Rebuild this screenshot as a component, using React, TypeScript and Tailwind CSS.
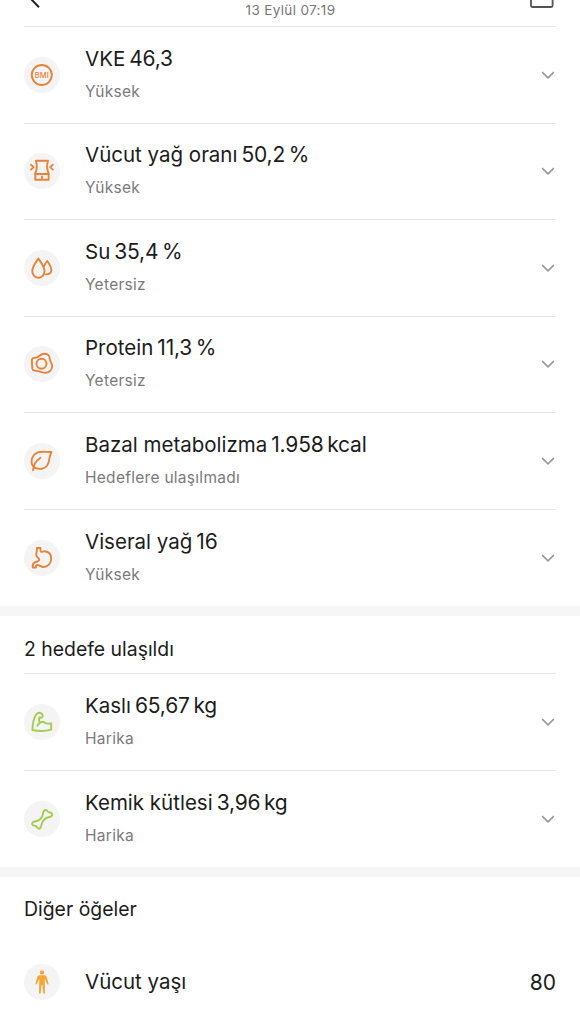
import type { ReactNode } from 'react';

type Item = {
  name: string;
  value: string;
  status: string;
  icon: ReactNode;
};

const bmiIcon = (
  <>
    <circle cx="17.8" cy="18" r="10" />
    <text x="17.8" y="20.7" textAnchor="middle" fontSize="7.6" fontWeight="500" fill="currentColor" stroke="none">BMI</text>
  </>
);

const waistIcon = (
  <>
    <path d="M11.9 7.8H24c-1.4 4.6-1.3 8.6.6 12.4v6.6H11.3v-6.6c1.9-3.8 2-7.8.6-12.4Z" />
    <path d="M11.3 21h13.3M18 23.4v1.8M7 11.8l2.6 2.3L7 16.6M28.8 11.8l-2.6 2.3 2.6 2.5" />
  </>
);

const waterIcon = (
  <>
    <path d="M14.4 8.4c2.4 3.7 6.1 8.2 6.1 12.7 0 3.9-2.7 6.7-6.1 6.7s-6.1-2.8-6.1-6.7c0-4.5 3.7-9 6.1-12.7Z" />
    <path d="M20 16.2c.9-2 2.1-3.8 3.2-5.2 2.1 3.1 4.2 6 4.2 8.9 0 2.8-2.3 4.5-5.8 4.5" />
  </>
);

const proteinIcon = (
  <>
    <path d="M8 13.5c.4-2.4 2.7-1.2 4.8-2.1 2.6-1 4.1-3.5 7.2-3.7 3.4-.2 5.6 1.7 5.7 4.8.1 3.2 2.7 4.9 2.5 8-.2 3.6-3.3 6.4-6.9 6.3-3.5-.1-5.6-1.9-9-1.9-2.8 0-4.3-1-4.1-3.5.2-2.8-.7-5.1-.2-7.9Z" />
    <circle cx="17.5" cy="17.7" r="5" />
  </>
);

const leafIcon = (
  <path d="M9 27.2c.5-5.1 3-9.4 7.5-12.4M9.6 23.8C5.8 19.6 7.5 11.8 14 9.4c4.4-1.7 9.5.1 13.4-.5-.5 2.5-1.7 3.7-2 6.6-.5 5.2-2.9 9.5-7.5 10.2-3.1.5-5.9-.1-8.3-1.9Z" />
);

const stomachIcon = (
  <path d="M12.9 8h3.6c0 1.5-.3 3.7.8 3.9 1.1.2 1.8-.9 3.4-.7 4 .5 6.5 3.3 6.5 7.3 0 5.1-3.4 8.5-7.6 8.5-2.8 0-4.1-2-6.2-2-1.2 0-1.6.9-1.5 2.5H8.7c-.4-3.7.8-5.3 3.8-5.8 1.8-.3 2.9-1.4 2.5-2.7-.4-1.2-2.4-1.6-2.7-4-.3-2.2.9-4.2.6-7Z" />
);

const muscleIcon = (
  <path d="M8.4 26c.2-5.8.9-10.9 3.4-15 1.3-2.2 3.8-2.9 5.6-1.4 1.4 1.1 1.7 2.5.8 3.5-.8.9-1.9.8-2.9.3-.6 2.1-.5 3.7.4 5.7 2.3-1.7 4.3-1.5 5.6.1 1.7.7 3.7.4 5.9.2v6.3c-6.2 1.7-12.6 1.7-18.8.3ZM15.7 19.1c-1.3.7-2 1.5-2.3 2.7" />
);

const boneIcon = (
  <path d="M19 13c0-3 1.5-4.3 3-4 1.3.3 1.3 2 3 2.3 2.5.2 3.7 1.7 3 3.2-.7 1.5-2.5 1.5-4.5 2-3 1-4.5 3-5.5 5.5-.8 2-.5 4.5-2.5 5.6-1.7.7-2.3-1.4-3.2-2.2-1-.7-3.3-.4-4.1-2.1-.7-1.9 1.3-2.7 3.3-3C15 19.8 18.5 17 19 13Z" />
);

const attention: Item[] = [
  { name: 'VKE', value: '46,3', status: 'Yüksek', icon: bmiIcon },
  { name: 'Vücut yağ oranı', value: '50,2 %', status: 'Yüksek', icon: waistIcon },
  { name: 'Su', value: '35,4 %', status: 'Yetersiz', icon: waterIcon },
  { name: 'Protein', value: '11,3 %', status: 'Yetersiz', icon: proteinIcon },
  { name: 'Bazal metabolizma', value: '1.958 kcal', status: 'Hedeflere ulaşılmadı', icon: leafIcon },
  { name: 'Viseral yağ', value: '16', status: 'Yüksek', icon: stomachIcon },
];

const reached: Item[] = [
  { name: 'Kaslı', value: '65,67 kg', status: 'Harika', icon: muscleIcon },
  { name: 'Kemik kütlesi', value: '3,96 kg', status: 'Harika', icon: boneIcon },
];

function IconBadge({ color, children }: { color: string; children: ReactNode }) {
  return (
    <div className={`size-9 shrink-0 rounded-full bg-[#f4f4f4] ${color}`}>
      <svg viewBox="0 0 36 36" className="size-9" fill="none" stroke="currentColor" strokeWidth="1.9" strokeLinejoin="round" strokeLinecap="round">
        {children}
      </svg>
    </div>
  );
}

function Row({ item, color }: { item: Item; color: string }) {
  return (
    <li className="flex h-[96.5px] items-center border-b border-[#e6e6e6] last:border-b-0">
      <IconBadge color={color}>{item.icon}</IconBadge>
      <div className="ml-[25px] flex-1 pb-[3px]">
        <div className="flex items-baseline gap-1 text-[20.5px] leading-7 text-[#1c1c1c]">
          <span>{item.name}</span>
          <span className="text-[21px] tracking-[-0.2px] [word-spacing:-2px]">{item.value}</span>
        </div>
        <div className="mt-[9px] text-[15.5px] leading-5 tracking-[0.28px] text-[#7a7a7a]">{item.status}</div>
      </div>
      <svg viewBox="0 0 14 8" className="mr-px h-2 w-3.5" fill="none" stroke="#999" strokeWidth="1.6">
        <path d="M1.2 1.2L7 6.8l5.8-5.6" />
      </svg>
    </li>
  );
}

function Divider() {
  return <div className="h-2.5 bg-[#f6f6f6]" />;
}

export default function App() {
  return (
    <div className="h-[1024px] w-[580px] overflow-hidden bg-white font-['Inter','Noto_Sans',sans-serif] text-[#1c1c1c]">
      <header className="mx-6 flex h-[27px] items-start justify-between border-b border-[#e6e6e6]">
        <svg viewBox="0 0 24 8" className="h-2 w-6" fill="none" stroke="#222" strokeWidth="2">
          <path d="M6-2l9 9.2" />
        </svg>
        <span className="pl-[3px] text-[13.5px] leading-5 tracking-[0.35px] text-[#777]">13 Eylül 07:19</span>
        <svg viewBox="0 0 24 8" className="mr-0.5 h-2 w-6" fill="none" stroke="#555" strokeWidth="1.8">
          <path d="M1-3v8.5Q1 7 2.5 7h18.6q1.5 0 1.5-1.5V-3" />
        </svg>
      </header>

      <ul className="px-6">
        {attention.map((item) => <Row key={item.name} item={item} color="text-[#e8833a]" />)}
      </ul>

      <Divider />

      <section>
        <h2 className="mx-6 flex h-[58px] items-center border-b border-[#e6e6e6] pt-2.5 text-[19.4px]">2 hedefe ulaşıldı</h2>
        <ul className="px-6">
          {reached.map((item) => <Row key={item.name} item={item} color="text-[#a5cb50]" />)}
        </ul>
      </section>

      <Divider />

      <section className="px-6">
        <h2 className="flex h-[57px] items-center pt-[9px] text-[19.4px]">Diğer öğeler</h2>
        <div className="flex h-[96.5px] items-center">
          <IconBadge color="text-[#f3a73b]">
            <g fill="currentColor" stroke="none">
              <circle cx="18" cy="8.4" r="2.2" />
              <path d="M15.4 11.2h5.2c1.1 0 1.8.7 2.1 1.8l1.8 6.4c.3 1.2-1 1.6-1.4.5l-2.4-5.2.3 14c0 1.2-1.6 1.3-1.8.1L18.4 21h-.8l-.8 7.8c-.2 1.2-1.8 1.1-1.8-.1l.3-14-2.4 5.2c-.4 1.1-1.7.7-1.4-.5l1.8-6.4c.3-1.1 1-1.8 2.1-1.8Z" />
            </g>
          </IconBadge>
          <span className="ml-[25px] flex-1 text-[20.5px]">Vücut yaşı</span>
          <span className="text-[21px]">80</span>
        </div>
      </section>
    </div>
  );
}
